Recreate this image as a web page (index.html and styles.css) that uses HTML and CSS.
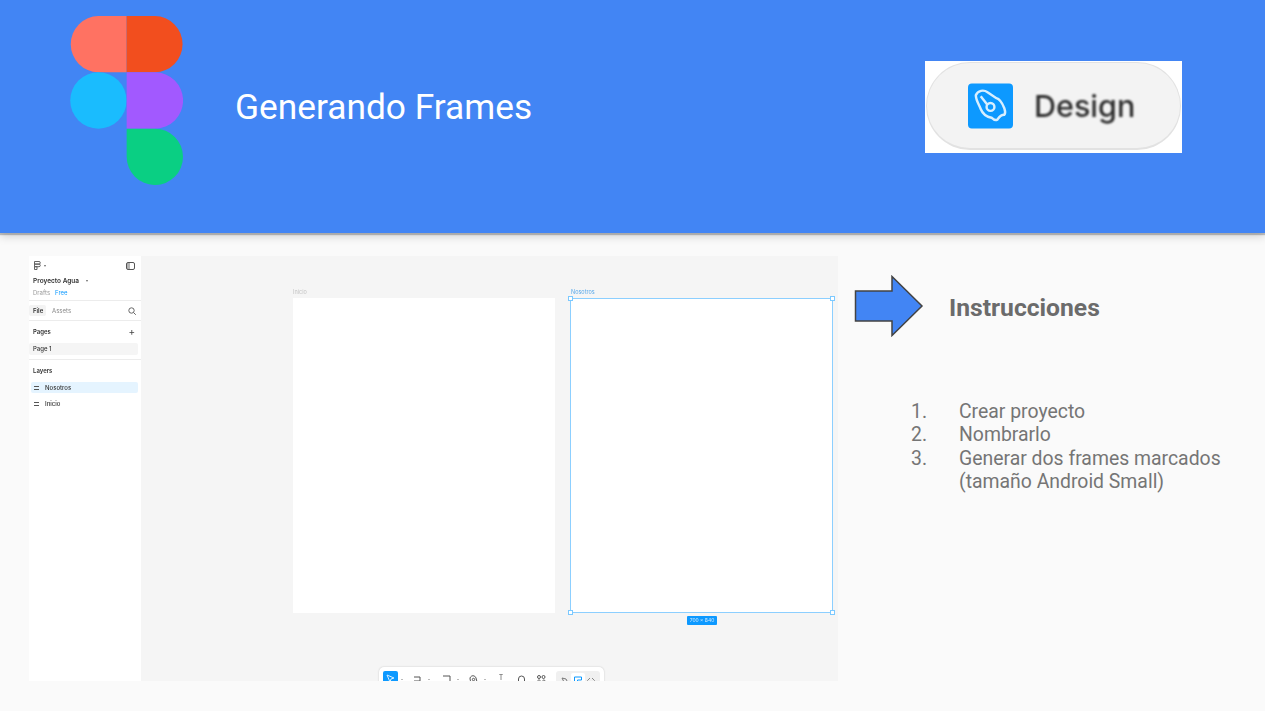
FILE: index.html
```html
<!DOCTYPE html>
<html lang="es">
<head>
  <meta charset="UTF-8">
  <title>Generando Frames</title>
  <link rel="stylesheet" href="styles.css">
</head>
<body>
  <header class="banner">
    <svg class="figma-logo" width="113" height="169" viewBox="0 0 112.7 169">
      <path d="M56.5 0H28.25a28.17 28.17 0 0 0 0 56.33H56.5z" fill="#ff7262"/>
      <path d="M56.5 0h28.25a28.17 28.17 0 0 1 0 56.33H56.5z" fill="#f24e1e"/>
      <circle cx="28.25" cy="84.5" r="28.17" fill="#1abcfe"/>
      <path d="M56.5 56.33h28.25a28.17 28.17 0 0 1 0 56.34H56.5z" fill="#a259ff"/>
      <path d="M56.5 112.67h28.25a28.17 28.17 0 1 1-28.25 28.16z" fill="#0acf83"/>
    </svg>
    <h1 class="banner-title">Generando Frames</h1>
    <div class="design-card">
      <div class="design-pill">
        <svg class="design-icon" width="45" height="46" viewBox="0 0 46 46">
          <rect width="46" height="46" rx="4" fill="#0d99ff"/>
          <path d="M8 12c2-5 8-6 12-3l9 6c4 1 6 5 8 10 1 3 2 5 0 7-3 0-5 2-7 5-2 1-4 0-6-2-5-1-9-4-11-9-2-5-5-9-5-14z" fill="none" stroke="#d8efff" stroke-width="2.500"/>
          <path d="M13 13l7 9" stroke="#d8efff" stroke-width="2.500"/>
          <circle cx="23" cy="24" r="4" fill="none" stroke="#d8efff" stroke-width="2.500"/>
        </svg>
        <span class="design-label">Design</span>
      </div>
    </div>
  </header>

  <main class="content">
    <section class="shot">
      <aside class="side">
        <div class="side-top">
          <svg width="7" height="9" viewBox="0 0 7 9"><path d="M.5.500h4.500a1.300 1.300 0 0 1 0 2.600H.5zM.5 3.100h4.500a1.300 1.300 0 0 1 0 2.600H.5zM.5 5.700h2.500v2.800H.5z" fill="none" stroke="#555" stroke-width=".9"/></svg>
          <span class="caret"></span>
          <svg class="toggle" width="9" height="8" viewBox="0 0 9 8"><rect x=".5" y=".5" width="8" height="7" rx="1.500" fill="none" stroke="#555"/><rect x="1" y="1" width="3" height="6" fill="#555" opacity=".45"/></svg>
        </div>
        <div class="project"><b>Proyecto Agua</b><span class="caret"></span></div>
        <div class="drafts"><span>Drafts</span><span class="free">Free</span></div>
        <div class="tabs">
          <span class="tab-on">File</span>
          <span class="tab">Assets</span>
          <svg class="tab-search" width="8" height="8" viewBox="0 0 8 8"><circle cx="3.500" cy="3.500" r="2.700" fill="none" stroke="#666"/><path d="M5.500 5.500L7.800 7.800" stroke="#666"/></svg>
        </div>
        <div class="pages">
          <div class="side-head"><b>Pages</b><span class="plus">+</span></div>
          <div class="page-row">Page 1</div>
        </div>
        <div class="layers">
          <div class="side-head"><b>Layers</b></div>
          <div class="layer layer-on"><span class="bars"></span>Nosotros</div>
          <div class="layer"><span class="bars"></span>Inicio</div>
        </div>
      </aside>

      <div class="board">
        <span class="frame-name name-inicio">Inicio</span>
        <div class="frame frame-inicio"></div>
        <span class="frame-name name-nosotros">Nosotros</span>
        <div class="frame frame-nosotros">
          <i class="handle h-tl"></i><i class="handle h-tr"></i><i class="handle h-bl"></i><i class="handle h-br"></i>
        </div>
        <span class="size-tag">700 × 840</span>

        <div class="toolbar">
          <span class="tool-on"><svg width="9" height="9" viewBox="0 0 9 9"><path d="M1 1l7 3-3 1-1 3z" fill="none" stroke="#d5eeff"/></svg></span>
          <span class="mini mini-first"></span>
          <svg class="tool t1" width="9" height="9" viewBox="0 0 9 9"><path d="M1 2h6v7M1 6h6" fill="none" stroke="#555"/></svg>
          <span class="mini"></span>
          <svg class="tool t2" width="9" height="9" viewBox="0 0 9 9"><path d="M1 1h7v8" fill="none" stroke="#555"/></svg>
          <span class="mini"></span>
          <svg class="tool t3" width="9" height="9" viewBox="0 0 9 9"><path d="M1 3c1-3 5-3 6 0l1 4-3 2C2 8 1 6 1 3z" fill="none" stroke="#555"/><circle cx="4.500" cy="4.500" r="1.200" fill="none" stroke="#555"/></svg>
          <span class="mini"></span>
          <span class="tool-t">T</span>
          <svg class="tool t4" width="9" height="9" viewBox="0 0 9 9"><path d="M1.500 7V4a3 3 0 0 1 6 0v3" fill="none" stroke="#555"/></svg>
          <svg class="tool t5" width="10" height="9" viewBox="0 0 10 9"><circle cx="3" cy="2" r="1.500" fill="none" stroke="#555"/><circle cx="7.500" cy="2" r="1.500" fill="none" stroke="#555"/><path d="M1 8c0-2 1-3 2-3s2 1 2 3M6 8c0-2 1-3 2-3s1 1 1 3" fill="none" stroke="#555"/></svg>
          <div class="modes">
            <span class="mode"><svg width="8" height="9" viewBox="0 0 8 9"><path d="M1 2l4 1 2 4-3 1z" fill="none" stroke="#777"/></svg></span>
            <span class="mode mode-on"><svg width="8" height="9" viewBox="0 0 8 9"><path d="M.5 1h7v3h-4v5h-3z" fill="none" stroke="#0d99ff"/></svg></span>
            <span class="mode"><svg width="8" height="9" viewBox="0 0 8 9"><path d="M3 2L.5 4.500 3 7M5 2l2.500 2.500L5 7" fill="none" stroke="#888"/></svg></span>
          </div>
        </div>
      </div>
    </section>

    <section class="notes">
      <div class="notes-head">
        <svg class="arrow" width="70" height="62" viewBox="0 0 70 62">
          <path d="M1.500 16H38V1.500L68 31 38 60.500V46H1.500z" fill="#4285f4" stroke="#434343" stroke-width="1.500"/>
        </svg>
        <h2 class="notes-title">Instrucciones</h2>
      </div>
      <ol class="steps">
        <li>Crear proyecto</li>
        <li>Nombrarlo</li>
        <li>Generar dos frames marcados (tamaño Android Small)</li>
      </ol>
    </section>
  </main>
</body>
</html>
```

FILE: styles.css
```css
* {
  box-sizing: border-box;
}
html, body {
  height: 100%;
}
body {
  margin: 0;
  overflow: hidden;
  background-color: #fafafa;
  font-family: Roboto, "Liberation Sans", sans-serif;
}

/* franja azul */
.banner {
  position: relative;
  display: flex;
  height: 233px;
  padding: 16px 83px 0 70px;
  background-color: #4285f4;
  box-shadow: 0 2px 1px rgba(0, 0, 0, .22), 0 3px 9px rgba(0, 0, 0, .18);
}
.figma-logo {
  flex: none;
}
.banner-title {
  flex: 1;
  margin: 69px 0 0 52px;
  color: #fff;
  font-size: 35.300px;
  font-weight: 400;
  line-height: 44px;
}
.design-card {
  flex: none;
  width: 257px;
  height: 92px;
  margin-top: 45px;
  padding: 1px 1px 3px 1px;
  background-color: #fff;
}
.design-pill {
  display: flex;
  align-items: center;
  gap: 21px;
  height: 88px;
  padding-left: 41px;
  background-color: #f3f3f3;
  border: 1.500px solid #e2e2e2;
  border-bottom-width: 2.500px;
  border-radius: 44px;
}
.design-icon {
  flex: none;
  filter: blur(.7px);
}
.design-label {
  color: #2b2b2b;
  font-family: Inter, sans-serif;
  font-size: 30.500px;
  font-weight: 500;
  filter: blur(.8px);
}

/* captura de figma */
.content {
  display: flex;
  padding: 23px 0 0 29px;
}
.shot {
  flex: none;
  display: flex;
  width: 809px;
  height: 425px;
  overflow: hidden;
  font-family: Inter, sans-serif;
  font-size: 6px;
  color: #333;
}
.side {
  flex: none;
  width: 112px;
  background-color: #fff;
  filter: blur(.6px);
}
.side b {
  font-weight: 600;
}
.side-top {
  display: flex;
  align-items: center;
  gap: 3px;
  height: 18px;
  padding: 1px 6px 0 5px;
}
.toggle {
  margin-left: auto;
}
.caret {
  width: 0;
  height: 0;
  border: 1.500px solid transparent;
  border-top: 2px solid #666;
  border-bottom: 0;
}
.project {
  display: flex;
  align-items: center;
  gap: 7px;
  height: 10px;
  margin-top: 2px;
  padding-left: 4px;
  font-size: 6.500px;
}
.drafts {
  display: flex;
  gap: 5px;
  height: 15px;
  padding: 3px 0 0 4px;
  color: #999;
  border-bottom: 1px solid #ececec;
}
.free {
  color: #0d99ff;
}
.tabs {
  display: flex;
  align-items: center;
  height: 20px;
  border-bottom: 1px solid #ececec;
}
.tab-on {
  width: 17px;
  height: 11px;
  padding-left: 4px;
  line-height: 11px;
  font-weight: 600;
  background-color: #f3f3f3;
  border-radius: 2px;
}
.tab {
  margin-left: 6px;
  color: #888;
}
.tab-search {
  margin-left: auto;
  margin-right: 5px;
}
.side-head {
  display: flex;
  align-items: center;
  justify-content: space-between;
  height: 10px;
  padding: 0 6px 0 4px;
}
.plus {
  font-size: 10px;
  color: #444;
}
.pages {
  height: 39px;
  padding-top: 5px;
  border-bottom: 1px solid #ececec;
}
.page-row {
  width: 109px;
  height: 12px;
  margin-top: 7px;
  padding-left: 4px;
  line-height: 12px;
  font-weight: 500;
  background-color: #f5f5f5;
  border-radius: 2px;
}
.layers {
  padding-top: 5px;
}
.layer {
  display: flex;
  align-items: center;
  gap: 6px;
  width: 107px;
  height: 11px;
  margin: 0 0 5px 2px;
  padding-left: 3px;
  font-weight: 500;
}
.layers .side-head {
  margin-bottom: 7px;
}
.layer-on {
  background-color: #e5f4ff;
  border-radius: 2px;
}
.bars {
  width: 5px;
  height: 4px;
  border-top: 1px solid #555;
  border-bottom: 1px solid #555;
}

/* lienzo: los frames van colocados a mano */
.board {
  position: relative;
  flex: 1;
  background-color: #f5f5f5;
}
.frame-name {
  position: absolute;
  top: 33px;
  color: #c4c4c4;
  font-size: 5.500px;
  filter: blur(.4px);
}
.name-inicio {
  left: 152px;
}
.name-nosotros {
  left: 430px;
  color: #5aa9ea;
}
.frame {
  position: absolute;
  top: 42px;
  height: 315px;
  background-color: #fff;
}
.frame-inicio {
  left: 152px;
  width: 262px;
}
.frame-nosotros {
  left: 429px;
  width: 263px;
  border: 1px solid #8ccfff;
}
.handle {
  position: absolute;
  width: 5px;
  height: 5px;
  background-color: #fff;
  border: 1px solid #7cc9ff;
}
.h-tl { left: -3px; top: -3px; }
.h-tr { right: -3px; top: -3px; }
.h-bl { left: -3px; bottom: -3px; }
.h-br { right: -3px; bottom: -3px; }
.size-tag {
  position: absolute;
  left: 546px;
  top: 360px;
  width: 30px;
  height: 9px;
  color: #cfeaff;
  font-size: 5px;
  line-height: 9px;
  text-align: center;
  background-color: #0d99ff;
  border-radius: 1px;
  filter: blur(.25px);
}
.toolbar {
  position: absolute;
  left: 238px;
  top: 411px;
  display: flex;
  align-items: flex-start;
  width: 225px;
  height: 20px;
  padding: 4px 0 0 4px;
  background-color: #fff;
  border-radius: 5px;
  box-shadow: 0 0 2px rgba(0, 0, 0, .2);
}
.tool-on {
  display: flex;
  align-items: center;
  justify-content: center;
  width: 15px;
  height: 15px;
  background-color: #0d99ff;
  border-radius: 2px;
}
.mini {
  flex: none;
  width: 2px;
  height: 0;
  margin: 8px 0 0 6px;
  border: 1px solid transparent;
  border-top: 1.500px solid #777;
  border-bottom: 0;
}
.mini-first {
  margin-left: 3px;
}
.tool {
  flex: none;
  margin-top: 4px;
  filter: blur(.4px);
}
.t1 { margin-left: 10px; }
.t2 { margin-left: 12px; }
.t3 { margin-left: 10px; }
.t4 { margin-left: 12px; }
.t5 { margin-left: 10px; }
.tool-t {
  flex: none;
  width: 8px;
  margin: 2.500px 0 0 11px;
  color: #555;
  font-size: 7px;
  line-height: 7px;
  text-align: center;
  filter: blur(.3px);
}
.modes {
  flex: none;
  display: flex;
  width: 44px;
  margin-left: 10px;
  padding: 2px;
  background-color: #f0f0f0;
  border-radius: 3px;
}
.mode {
  display: flex;
  align-items: flex-start;
  justify-content: center;
  width: 13.300px;
  height: 14px;
  padding-top: 3px;
  filter: blur(.3px);
}
.mode-on {
  background-color: #fff;
  border-radius: 2px;
}

/* columna derecha */
.notes {
  flex: 1;
  padding-left: 16px;
  color: #757575;
}
.notes-head {
  display: flex;
  align-items: center;
  gap: 25px;
  margin-top: 19px;
}
.arrow {
  flex: none;
}
.notes-title {
  margin: 0;
  padding-top: 3px;
  color: #6b6b6b;
  font-size: 24.670px;
  font-weight: 700;
}
.steps {
  margin: 63px 0 0;
  padding: 0 0 0 105px;
  width: 385px;
  font-size: 19.400px;
  line-height: 23.400px;
  list-style: none;
  counter-reset: step;
}
.steps li {
  position: relative;
  counter-increment: step;
}
.steps li::before {
  content: counter(step) ".";
  position: absolute;
  left: -48px;
}
```
